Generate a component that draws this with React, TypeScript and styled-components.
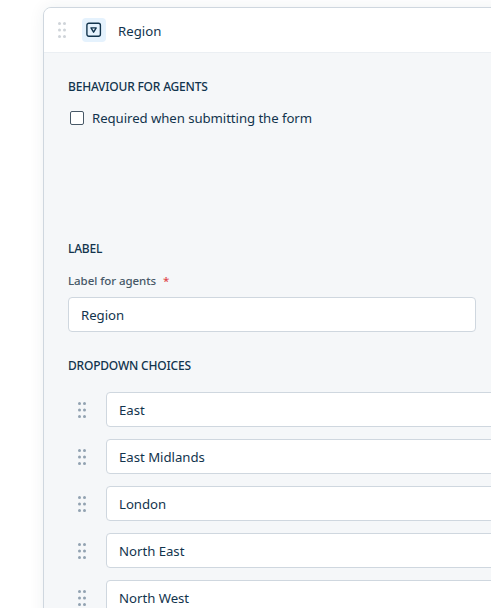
import React from "react";
import styled, { createGlobalStyle } from "styled-components";

const GlobalStyle = createGlobalStyle`
  *, *::before, *::after { box-sizing: border-box; }
  html, body { margin: 0; background: #fff; overflow: hidden; }
  body {
    font-family: "Noto Sans", "Open Sans", sans-serif;
    font-size: 13.2px;
    line-height: 20px;
    letter-spacing: -0.06px;
    color: #12344d;
  }
`;

const Page = styled.main`
  height: 608px;
  padding: 7px 0 0 43px;
  overflow: hidden;
`;

const Card = styled.section`
  width: 640px;
  height: 720px;
  border: 1px solid #cfd7df;
  border-radius: 8px;
  background: #f5f7f9;
  box-shadow: 0 0 16px rgba(24, 50, 71, 0.07);
  overflow: hidden;
`;

const Header = styled.header`
  display: flex;
  align-items: center;
  height: 45px;
  padding-left: 14px;
  border-bottom: 1px solid #ebeff3;
  background: #fff;
`;

const Tile = styled.span`
  display: flex;
  align-items: center;
  justify-content: center;
  width: 24px;
  height: 24px;
  margin: 0 12px 0 16px;
  border-radius: 4px;
  background: #e5f2fd;
`;

const Title = styled.span`
  padding-top: 2px;
  letter-spacing: 0;
`;

const Body = styled.div`
  display: flex;
  flex-direction: column;
  padding: 24px 24px 0;
`;

const Heading = styled.h2`
  height: 20px;
  margin: 0;
  font-size: 12px;
  font-weight: 500;
  line-height: 20px;
  letter-spacing: -0.2px;
`;

const CheckLabel = styled.label`
  display: flex;
  align-items: center;
  height: 20px;
  margin: 11px 0 111px 2px;
`;

const Checkbox = styled.input`
  appearance: none;
  width: 14px;
  height: 14px;
  margin: 0 8px 0 0;
  border: 1px solid #475867;
  border-radius: 2px;
  background: #fff;
`;

const FieldLabel = styled.label`
  height: 20px;
  margin: 12px 0 6px;
  font-size: 11.5px;
  font-weight: 500;
  letter-spacing: -0.06px;
  color: #475867;
`;

const Required = styled.span`
  margin-left: 7px;
  color: #e0474b;
`;

const TextInput = styled.input<{ $width: number }>`
  flex: none;
  width: ${(p) => p.$width}px;
  height: 35px;
  padding: 1px 12px 0;
  border: 1px solid #cfd7df;
  border-radius: 4px;
  background: #fff;
  color: #12344d;
  font: inherit;
  letter-spacing: -0.02px;
  outline: none;
`;

const Choices = styled.ul`
  display: flex;
  flex-direction: column;
  gap: 12px;
  margin: 16px 0 0;
  padding: 0;
  list-style: none;
`;

const Choice = styled.li`
  display: flex;
  align-items: center;
  gap: 20px;
  padding-left: 10px;
`;

const LabelSection = styled.div`
  display: flex;
  flex-direction: column;
  margin-bottom: 24px;
`;

const Grip = ({ color }: { color: string }) => (
  <svg width="8" height="16" viewBox="0 0 8 16" fill={color} aria-hidden="true">
    {[1.5, 8, 14.5].map((y) => (
      <React.Fragment key={y}>
        <circle cx="1.5" cy={y} r="1.5" />
        <circle cx="6.5" cy={y} r="1.5" />
      </React.Fragment>
    ))}
  </svg>
);

const DropdownIcon = () => (
  <svg width="16" height="16" viewBox="0 0 16 16" fill="none" stroke="#12344d" aria-hidden="true">
    <rect x="0.9" y="1.25" width="13.5" height="13" rx="2" strokeWidth="1.4" />
    <path d="M5 5.9h5.2L7.6 10.2z" strokeWidth="1.4" strokeLinejoin="round" />
  </svg>
);

const choices = ["East", "East Midlands", "London", "North East", "North West"];

export default function App() {
  return (
    <>
      <GlobalStyle />
      <Page>
        <Card>
          <Header>
            <Grip color="#cfd4d9" />
            <Tile>
              <DropdownIcon />
            </Tile>
            <Title>Region</Title>
          </Header>
          <Body>
            <Heading>BEHAVIOUR FOR AGENTS</Heading>
            <CheckLabel>
              <Checkbox type="checkbox" />
              Required when submitting the form
            </CheckLabel>
            <LabelSection>
              <Heading>LABEL</Heading>
              <FieldLabel>
                Label for agents<Required>*</Required>
              </FieldLabel>
              <TextInput $width={408} defaultValue="Region" />
            </LabelSection>
            <Heading>DROPDOWN CHOICES</Heading>
            <Choices>
              {choices.map((name) => (
                <Choice key={name}>
                  <Grip color="#92a2b1" />
                  <TextInput $width={460} defaultValue={name} />
                </Choice>
              ))}
            </Choices>
          </Body>
        </Card>
      </Page>
    </>
  );
}
